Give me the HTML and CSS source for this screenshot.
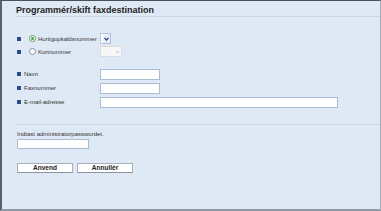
FILE: index.html
```html
<!DOCTYPE html>
<html>
<head>
<meta charset="utf-8">
<link rel="stylesheet" href="styles.css">
</head>
<body>
<div class="page">
  <h1 class="title">Programmér/skift faxdestination</h1>
  <div class="options">
    <div class="row">
      <div class="name"><span class="bullet"></span><span class="radio on"></span><span class="label">Hurtigopkaldsnummer</span></div>
      <span class="colon">:</span>
      <span class="select active"><span class="arrow"><svg width="5" height="4" viewBox="0 0 5 4"><path d="M0.5 0.8 L2.5 3 L4.5 0.8" fill="none" stroke="#27408b" stroke-width="1.2"/></svg></span></span>
    </div>
    <div class="row">
      <div class="name"><span class="bullet"></span><span class="radio"></span><span class="label">Kortnummer</span></div>
      <span class="colon">:</span>
      <span class="select disabled"><span class="arrow"><svg width="5" height="4" viewBox="0 0 5 4"><path d="M0.5 0.8 L2.5 3 L4.5 0.8" fill="none" stroke="#c4c4c4" stroke-width="1"/></svg></span></span>
    </div>
  </div>
  <div class="fields">
    <div class="row tall">
      <div class="name"><span class="bullet"></span><span class="label">Navn</span></div>
      <span class="colon">:</span>
      <span class="input short"></span>
    </div>
    <div class="row tall">
      <div class="name"><span class="bullet"></span><span class="label">Faxnummer</span></div>
      <span class="colon">:</span>
      <span class="input short"></span>
    </div>
    <div class="row tall">
      <div class="name"><span class="bullet"></span><span class="label">E-mail-adresse</span></div>
      <span class="colon">:</span>
      <span class="input long"></span>
    </div>
  </div>
  <div class="admin">
    <p class="prompt">Indtast administratorpasswordet.</p>
    <span class="input pass"></span>
    <div class="buttons">
      <button class="btn">Anvend</button>
      <button class="btn">Annullér</button>
    </div>
  </div>
</div>
</body>
</html>
```
FILE: styles.css
```css
html, body {
  margin: 0;
  padding: 0;
}
body {
  font-family: "Liberation Sans", Arial, sans-serif;
  color: #333;
}
.page {
  box-sizing: border-box;
  width: 381px;
  height: 211px;
  background: #dfe9f5;
  border-top: 1px solid #4b4f57;
  border-left: 2px solid #5b5f68;
  border-right: 1px solid #a4adb8;
  border-bottom: 2px solid #909aa6;
  overflow: hidden;
}
.title {
  margin: 3px 0 0 14px;
  height: 12px;
  font-size: 9px;
  line-height: 12px;
  font-weight: bold;
  color: #222;
  border-bottom: 1px solid #c6d4e4;
}
.options {
  margin-top: 15px;
  padding-left: 15px;
}
.fields {
  margin-top: 9px;
  padding-left: 15px;
  padding-bottom: 15px;
  border-bottom: 1px solid #c6d4e4;
  margin-left: 14px;
  padding-left: 1px;
}
.row {
  display: grid;
  grid-template-columns: 80px 3px auto;
  align-items: center;
  height: 13px;
}
.row.tall {
  height: 14px;
}
.name {
  display: flex;
  align-items: center;
  font-size: 6px;
  line-height: 8px;
}
.bullet {
  width: 4px;
  height: 4px;
  background: #2a4a8c;
  margin-right: 3px;
}
.radio {
  box-sizing: border-box;
  width: 7px;
  height: 7px;
  border: 1px solid #8a8f96;
  border-radius: 50%;
  background: #fff;
  margin: 0 2px 0 5px;
  display: flex;
  align-items: center;
  justify-content: center;
}
.radio.on {
  border-color: #5a9a5a;
}
.radio.on::after {
  content: "";
  width: 3px;
  height: 3px;
  border-radius: 50%;
  background: #3fa63f;
}
.colon {
  font-size: 6px;
  color: #b0b8c2;
  line-height: 8px;
}
.select {
  box-sizing: border-box;
  display: flex;
  justify-content: flex-end;
  height: 11px;
  border: 1px solid #b4c2d4;
  background: #fff;
}
.select.active {
  width: 11px;
}
.select.disabled {
  width: 22px;
  background: #f7f7f7;
  border-color: #dcdcdc;
}
.arrow {
  width: 7px;
  display: flex;
  align-items: center;
  justify-content: center;
}
.select.active .arrow {
  background: #e6edf8;
}
.input {
  box-sizing: border-box;
  display: block;
  height: 11px;
  background: #fff;
  border: 1px solid #a9bdd7;
}
.input.short {
  width: 60px;
}
.input.long {
  width: 238px;
}
.admin {
  margin-left: 15px;
}
.prompt {
  margin: 4px 0 0 0;
  font-size: 6px;
  line-height: 10px;
  color: #333;
}
.input.pass {
  width: 72px;
  height: 10px;
}
.buttons {
  display: flex;
  gap: 4px;
  margin-top: 14px;
}
.btn {
  box-sizing: border-box;
  width: 56px;
  height: 10px;
  margin: 0;
  padding: 0;
  background: #fff;
  border: 1px solid #a8b0ba;
  border-bottom-color: #8c939c;
  font-family: "Liberation Sans", Arial, sans-serif;
  font-weight: bold;
  font-size: 6.5px;
  line-height: 8px;
  color: #222;
}
```
